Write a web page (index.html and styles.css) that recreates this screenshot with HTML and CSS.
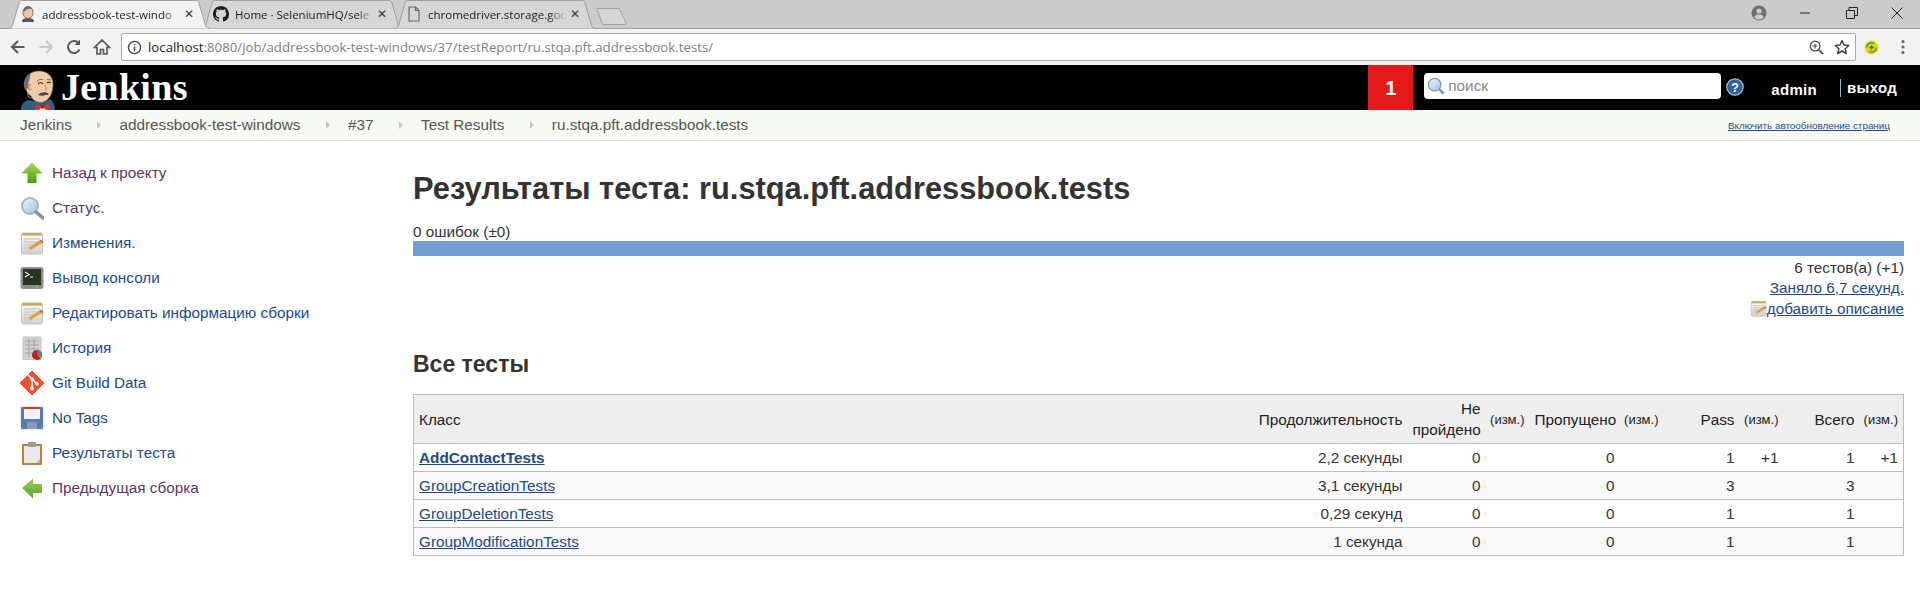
FILE: index.html
```html
<!DOCTYPE html>
<html lang="ru">
<head>
<meta charset="utf-8">
<title>Jenkins</title>
<link rel="stylesheet" href="styles.css">
</head>
<body>
<svg class="defs" width="0" height="0" aria-hidden="true">
  <defs>
    <linearGradient id="gUp" x1="0" y1="0" x2="0" y2="1"><stop offset="0" stop-color="#a6dc62"/><stop offset="1" stop-color="#4e9a06"/></linearGradient>
    <linearGradient id="gLeft" x1="0" y1="0" x2="0" y2="1"><stop offset="0" stop-color="#9ad05e"/><stop offset="1" stop-color="#5aa02a"/></linearGradient>
    <linearGradient id="gLens" x1="0" y1="0" x2="1" y2="1"><stop offset="0" stop-color="#eef5fc"/><stop offset="1" stop-color="#9dbfe2"/></linearGradient>
    <linearGradient id="gPaper" x1="0" y1="0" x2="0" y2="1"><stop offset="0" stop-color="#fbfbfb"/><stop offset="1" stop-color="#cfcfcb"/></linearGradient>
    <symbol id="notepad" viewBox="0 0 24 24">
      <rect x="1.500" y="2" width="21" height="21" rx="1.500" fill="url(#gPaper)" stroke="#b9b9b6" stroke-width=".8"/>
      <rect x="2" y="2" width="20" height="2.600" fill="#c9a95a"/>
      <path d="M4 8h16M4 11h15M4 14h9M4 17h6" stroke="#bdbdbd" stroke-width="1"/>
      <path d="M7 20.500l1.500-4L19.500 9.500l3 2.500L10.500 19z" fill="#dc9f4c"/>
      <path d="M7 20.500l1.500-4 2 2.500z" fill="#f2d7a6"/>
      <path d="M19.500 9.500l1.300-.8 2.700 2.200-1 1.100z" fill="#c4503c"/>
    </symbol>
  </defs>
</svg>

<div class="chrome-tabs">
  <div class="tab tab-active">
    <svg class="tab-shape" viewBox="0 0 202 29" preserveAspectRatio="none"><path d="M0 28.500C3 28.500 4 27 5 24L11 3C11.600 1 12.500 .5 14 .5H188C189.500 .5 190.400 1 191 3L197 24C198 27 199 28.500 202 28.500" fill="#f2f2f2" stroke="#a0a0a0"/></svg>
    <svg class="fav" viewBox="0 0 16 16"><ellipse cx="8" cy="6.500" rx="5" ry="6" fill="#f0c8a0" stroke="#555" stroke-width=".8"/><path d="M3.500 5C3 2 6 0 9 .5c2 .3 3 1.500 3.300 2.500C9 2.500 6 3 5 5.500z" fill="#6d6b6d"/><path d="M2 16c0-3 2-4 6-4s6 1 6 4z" fill="#3a5a7a"/><path d="M5.500 12l2.500 1 2.500-1v2.500L8 13.500l-2.500 1z" fill="#d33833"/></svg>
    <span class="tab-title">addressbook-test-windo</span>
    <span class="tab-x">✕</span>
  </div>
  <div class="tab">
    <svg class="tab-shape" viewBox="0 0 202 29" preserveAspectRatio="none"><path d="M0 28.500C3 28.500 4 27 5 24L11 3C11.600 1 12.500 .5 14 .5H188C189.500 .5 190.400 1 191 3L197 24C198 27 199 28.500 202 28.500" fill="#d6d6d6" stroke="#a0a0a0"/></svg>
    <svg class="fav" viewBox="0 0 16 16"><path fill="#1b1f23" d="M8 0C3.580 0 0 3.580 0 8c0 3.540 2.290 6.530 5.470 7.590.4.070.55-.17.55-.38 0-.19-.01-.82-.01-1.490-2.010.37-2.530-.49-2.690-.94-.09-.23-.48-.94-.82-1.130-.28-.15-.68-.52-.01-.53.630-.01 1.080.58 1.230.82.720 1.210 1.870.87 2.330.66.070-.52.280-.87.510-1.070-1.780-.2-3.640-.89-3.640-3.950 0-.87.310-1.590.82-2.150-.08-.2-.36-1.020.08-2.120 0 0 .67-.21 2.200.82.640-.18 1.320-.27 2-.27s1.360.09 2 .27c1.530-1.040 2.200-.82 2.200-.82.440 1.100.160 1.920.080 2.120.510.560.820 1.270.820 2.150 0 3.070-1.870 3.750-3.650 3.950.290.250.540.730.540 1.480 0 1.070-.010 1.930-.010 2.200 0 .210.150.460.550.380A8.010 8.010 0 0 0 16 8c0-4.420-3.580-8-8-8z"/></svg>
    <span class="tab-title">Home · SeleniumHQ/sele</span>
    <span class="tab-x">✕</span>
  </div>
  <div class="tab">
    <svg class="tab-shape" viewBox="0 0 202 29" preserveAspectRatio="none"><path d="M0 28.500C3 28.500 4 27 5 24L11 3C11.600 1 12.500 .5 14 .5H188C189.500 .5 190.400 1 191 3L197 24C198 27 199 28.500 202 28.500" fill="#d6d6d6" stroke="#a0a0a0"/></svg>
    <svg class="fav" viewBox="0 0 16 16"><path d="M3 1h6.500L13 4.500V15H3z" fill="none" stroke="#5f6368" stroke-width="1.100"/><path d="M9.500 1v3.500H13" fill="none" stroke="#5f6368" stroke-width="1.100"/></svg>
    <span class="tab-title">chromedriver.storage.goo</span>
    <span class="tab-x">✕</span>
  </div>
  <svg class="new-tab" viewBox="0 0 34 19"><path d="M1 1.500h21c1 0 1.500.4 1.800 1.200L30 16c.3 1-.2 1.500-1 1.500H8c-1 0-1.500-.4-1.800-1.200L1 2.500c-.2-.6 0-1 0-1z" fill="#d6d6d6" stroke="#a0a0a0"/></svg>
  <div class="window-controls">
    <svg class="win-profile" viewBox="0 0 16 16"><circle cx="8" cy="8" r="7.500" fill="#6e6e6e"/><circle cx="8" cy="6" r="2.600" fill="#ccc"/><path d="M3.200 12.200C4 10 6 9.500 8 9.500s4 .5 4.800 2.700C11.500 13.800 9.800 14.500 8 14.500s-3.500-.7-4.800-2.300z" fill="#ccc"/></svg>
    <svg class="win-min" viewBox="0 0 12 12"><path d="M1 6h10" stroke="#222" stroke-width="1"/></svg>
    <svg class="win-restore" viewBox="0 0 12 12"><path d="M.5 3.500h8v8h-8zM3 3.500V.5h8.500v8H8.500" fill="none" stroke="#222" stroke-width="1"/></svg>
    <svg class="win-close" viewBox="0 0 12 12"><path d="M.5.500l11 11M11.500.5l-11 11" stroke="#222" stroke-width="1"/></svg>
  </div>
</div>

<div class="chrome-toolbar">
  <svg class="nav-ic" viewBox="0 0 18 18"><path d="M15.500 9H3M9 3L3 9l6 6" fill="none" stroke="#5a5a5a" stroke-width="2"/></svg>
  <svg class="nav-ic" viewBox="0 0 18 18"><path d="M2.500 9H15M9 3l6 6-6 6" fill="none" stroke="#c8c8c8" stroke-width="2"/></svg>
  <svg class="nav-ic" viewBox="0 0 18 18"><path d="M14.500 11.500A6 6 0 1 1 13.500 5" fill="none" stroke="#5a5a5a" stroke-width="2"/><path d="M15 1.500V7H9.500z" fill="#5a5a5a"/></svg>
  <svg class="nav-ic" viewBox="0 0 18 18"><path d="M9 2l7.500 7.500H14V16h-3.500v-4.500h-3V16H4V9.500H1.500z" fill="none" stroke="#5a5a5a" stroke-width="1.700" stroke-linejoin="miter"/></svg>
  <div class="omnibox">
    <svg class="omni-info" viewBox="0 0 16 16"><circle cx="8" cy="8" r="6.500" fill="none" stroke="#444" stroke-width="1.500"/><path d="M8 7v5M8 4v1.600" stroke="#444" stroke-width="1.600"/></svg>
    <span class="url"><span class="url-host">localhost</span>:8080/job/addressbook-test-windows/37/testReport/ru.stqa.pft.addressbook.tests/</span>
    <svg class="omni-zoom" viewBox="0 0 16 16"><circle cx="6.500" cy="6.500" r="5.200" fill="none" stroke="#444" stroke-width="1.300"/><path d="M10.500 10.500L15 15" stroke="#444" stroke-width="1.700"/><path d="M4 6.500h5M6.500 4v5" stroke="#444" stroke-width="1.100"/></svg>
    <svg class="omni-star" viewBox="0 0 16 16"><path d="M8 1.500l2 4.500 4.800.5-3.600 3.200 1 4.800L8 12l-4.200 2.500 1-4.800L1.200 6.500 6 6z" fill="none" stroke="#444" stroke-width="1.500" stroke-linejoin="round"/></svg>
  </div>
  <svg class="ext" viewBox="0 0 16 16"><circle cx="8" cy="8" r="7.500" fill="#e8d820"/><path d="M3 8a5 5 0 0 1 8-4M13 8a5 5 0 0 1-8 4" fill="none" stroke="#4c9a3c" stroke-width="1.600"/><path d="M8 5.500v5M5.500 8h5" stroke="#2e8b2e" stroke-width="1.800"/></svg>
  <svg class="kebab" viewBox="0 0 4 16"><circle cx="2" cy="2.500" r="1.600" fill="#5f6368"/><circle cx="2" cy="8" r="1.600" fill="#5f6368"/><circle cx="2" cy="13.500" r="1.600" fill="#5f6368"/></svg>
</div>

<header class="jk-header">
  <svg class="jk-logo" viewBox="0 0 36 40">
    <path d="M1 40c0-5 2-8 7-10l7 1 9 1 6-3c3 2 5 6 5 11z" fill="#2f5f7f"/>
    <path d="M6 13C5 5 12 1 19 1c8 0 14 5 14 13 0 7-2 12-5 15-3 3-7 4-10 3-4-1-6-3-7-6-2-1-5-4-5-8z" fill="#f0cba6" stroke="#7a7268" stroke-width=".6"/>
    <path d="M5 20C2 13 5 5 11 3c-1 3-1 5-2 8-1 2-1 5-1 7-1 1-2 1-3 2zM7 22c1 3 3 5 5 7-2 0-4-2-5-4z" fill="#6d6b6d"/>
    <path d="M11 15c-2-1-3.500 0-3 2.500s2.500 3 3.500 2" fill="#e8b890" stroke="#8a6a50" stroke-width=".7"/>
    <path d="M18 14c1.500-1.500 3.500-1.500 5 0M27 13c1-1 2.500-1 3.500 0" fill="none" stroke="#3a2a20" stroke-width="1.100"/>
    <path d="M17 11c2-1.500 4-2 6-1.500M27 9.500c1.500-.5 3 0 4 1" fill="none" stroke="#6a5040" stroke-width=".8"/>
    <path d="M18 25c2-3 8-4 11-1-1 1-2 1-4 1-1 1-5 1-7 0z" fill="#4a4444"/>
    <path d="M25 15c1 2 1.500 4 .5 6" fill="none" stroke="#a07858" stroke-width=".8"/>
    <path d="M16 34l6 2.500 6.500-3 1.500 6.500H15z" fill="#d33833"/>
    <circle cx="22.500" cy="36.500" r="1.700" fill="#a01c1c"/>
    <path d="M20 38.500h5l.5 1.500h-6z" fill="#eee"/>
  </svg>
  <span class="jk-name">Jenkins</span>
  <span class="jk-spacer"></span>
  <span class="jk-badge">1</span>
  <div class="jk-search">
    <svg class="jk-search-ic" viewBox="0 0 20 20"><circle cx="8.500" cy="8.500" r="7" fill="url(#gLens)" stroke="#8d9aa5" stroke-width="1.500"/><path d="M13.500 13.500L18.500 18.500" stroke="#8a8a8a" stroke-width="2.600"/></svg>
    <span class="jk-search-text">поиск</span>
  </div>
  <svg class="jk-help" viewBox="0 0 18 18"><circle cx="9" cy="9" r="8.200" fill="#2f5f9f" stroke="#a8c0e0" stroke-width="1.200"/><text x="9" y="14" text-anchor="middle" class="jk-help-q">?</text></svg>
  <span class="jk-user">admin</span>
  <span class="jk-logout">выход</span>
</header>

<nav class="breadcrumbs">
  <span class="crumb">Jenkins</span><span class="crumb-arrow"></span>
  <span class="crumb">addressbook-test-windows</span><span class="crumb-arrow"></span>
  <span class="crumb">#37</span><span class="crumb-arrow"></span>
  <span class="crumb">Test Results</span><span class="crumb-arrow"></span>
  <span class="crumb">ru.stqa.pft.addressbook.tests</span>
  <a class="autorefresh" href="#">Включить автообновление страниц</a>
</nav>

<div class="page">
  <aside class="tasks">
    <a class="task visited" href="#">
      <svg class="task-ic" viewBox="0 0 24 24"><path d="M12 1.500L22.500 12.500H16.500V22H7.500V12.500H1.500z" fill="url(#gUp)"/></svg>Назад к проекту</a>
    <a class="task visited" href="#">
      <svg class="task-ic" viewBox="0 0 24 24"><circle cx="10" cy="10" r="8" fill="url(#gLens)" stroke="#a9b4be" stroke-width="2"/><path d="M16 16l7 6" stroke="#8f8f8f" stroke-width="3.500" stroke-linecap="round"/></svg>Статус.</a>
    <a class="task" href="#"><svg class="task-ic"><use href="#notepad"/></svg>Изменения.</a>
    <a class="task" href="#">
      <svg class="task-ic" viewBox="0 0 24 24"><rect x=".5" y="1" width="23" height="22" rx="3" fill="#8c8c88"/><rect x="3" y="3" width="18" height="16" fill="#26351f"/><path d="M5 6l4 2.500L5 11" fill="none" stroke="#e8f0e0" stroke-width="1.200"/><path d="M10 11h3" stroke="#e8f0e0"/><circle cx="17" cy="21" r=".8" fill="#8ae234"/></svg>Вывод консоли</a>
    <a class="task" href="#"><svg class="task-ic"><use href="#notepad"/></svg>Редактировать информацию сборки</a>
    <a class="task" href="#">
      <svg class="task-ic" viewBox="0 0 24 24"><rect x="3" y="1" width="18" height="23" fill="#d3d3d0" stroke="#aaa" stroke-width=".6"/><path d="M5 5h14M5 9h14M5 13h14M5 17h10M9 3v18M14 3v16" stroke="#a5a5a5" stroke-width="1"/><circle cx="17" cy="19" r="5" fill="#c91a1a"/><path d="M17 19V14a5 5 0 0 1 5 5z" fill="#4a7fbf"/><path d="M17 19h5a5 5 0 0 1-1.500 3.500z" fill="#6a9a3a"/></svg>История</a>
    <a class="task" href="#">
      <svg class="task-ic" viewBox="0 0 24 24"><path d="M12 0l12 12-12 12L0 12z" fill="#f05033" stroke="#f05033" stroke-linejoin="round"/><path d="M8 4l4 4M12 8v9M12 8l5 5" stroke="#fff" stroke-width="1.500"/><circle cx="12" cy="17.500" r="2" fill="#fff"/><circle cx="12" cy="8" r="1.800" fill="#fff"/><circle cx="17" cy="13" r="1.800" fill="#fff"/></svg>Git Build Data</a>
    <a class="task" href="#">
      <svg class="task-ic" viewBox="0 0 24 24"><rect x="0" y="0" width="24" height="24" rx="1" fill="#eaeaea"/><rect x="1" y="1" width="22" height="22" rx="1" fill="#5a7bb5"/><rect x="4" y="1" width="16" height="12" fill="#f4f4f4"/><rect x="4" y="1" width="16" height="2" fill="#d33"/><rect x="7" y="16" width="10" height="7" fill="#8a9bb5"/></svg>No Tags</a>
    <a class="task" href="#">
      <svg class="task-ic" viewBox="0 0 24 24"><rect x="2" y="3" width="20" height="21" rx="1" fill="#b8843e"/><rect x="4" y="5" width="16" height="17" fill="#e9e9e7"/><path d="M16 22l4-4v4z" fill="#bbb"/><rect x="8" y="1" width="8" height="5" rx="1" fill="#9a9a9a"/></svg>Результаты теста</a>
    <a class="task visited" href="#">
      <svg class="task-ic" viewBox="0 0 24 24"><path d="M2 12L13 2.500V8h9v9h-9v5.500z" fill="url(#gLeft)"/></svg>Предыдущая сборка</a>
  </aside>

  <main class="main">
    <h1 class="title">Результаты теста: ru.stqa.pft.addressbook.tests</h1>
    <div class="fails">0 ошибок (±0)</div>
    <div class="bar"></div>
    <div class="summary">
      <div>6 тестов(а) (+1)</div>
      <div><a href="#">Заняло 6,7 секунд.</a></div>
      <div class="add-desc"><svg class="note-ic"><use href="#notepad"/></svg><a href="#">добавить описание</a></div>
    </div>
    <h2 class="subtitle">Все тесты</h2>
    <table class="results">
      <colgroup>
        <col><col class="c-dur"><col class="c-fail"><col class="c-chg"><col class="c-skip"><col class="c-chg">
        <col class="c-pass"><col class="c-chg"><col class="c-pass"><col class="c-chg">
      </colgroup>
      <thead>
        <tr>
          <th class="left">Класс</th><th>Продолжительность</th><th>Не пройдено</th><th class="chg">(изм.)</th>
          <th>Пропущено</th><th class="chg">(изм.)</th><th>Pass</th><th class="chg">(изм.)</th><th>Всего</th><th class="chg">(изм.)</th>
        </tr>
      </thead>
      <tbody>
        <tr><td class="left"><a class="strong" href="#">AddContactTests</a></td><td>2,2 секунды</td><td>0</td><td></td><td>0</td><td></td><td>1</td><td>+1</td><td>1</td><td>+1</td></tr>
        <tr><td class="left"><a href="#">GroupCreationTests</a></td><td>3,1 секунды</td><td>0</td><td></td><td>0</td><td></td><td>3</td><td></td><td>3</td><td></td></tr>
        <tr><td class="left"><a href="#">GroupDeletionTests</a></td><td>0,29 секунд</td><td>0</td><td></td><td>0</td><td></td><td>1</td><td></td><td>1</td><td></td></tr>
        <tr><td class="left"><a href="#">GroupModificationTests</a></td><td>1 секунда</td><td>0</td><td></td><td>0</td><td></td><td>1</td><td></td><td>1</td><td></td></tr>
      </tbody>
    </table>
  </main>
</div>
</body>
</html>
```
FILE: styles.css
```css
* { box-sizing: border-box; }
html, body { margin: 0; padding: 0; height: 611px; overflow: hidden; background: #fff; }
body { font-family: "Liberation Sans", Arial, sans-serif; font-size: 15.300px; color: #333; }
a { color: #204a87; }
.defs { display: block; height: 0; }

/* browser tabs */
.chrome-tabs { height: 29px; background: #cbcbcb; border-bottom: 1px solid #a0a0a0; display: flex; align-items: flex-start; padding-left: 8px; font-family: "Open Sans", "Noto Sans", sans-serif; }
.tab { position: relative; width: 202px; height: 29px; margin-right: -9px; display: flex; align-items: center; padding: 0 0 1px 12px; }
.tab-active { z-index: 2; }
.tab-shape { position: absolute; inset: 0; width: 100%; height: 100%; z-index: 0; }
.fav { position: relative; width: 16px; height: 16px; flex: none; }
.tab-title { position: relative; margin-left: 6px; width: 138px; flex: none; white-space: nowrap; overflow: hidden; font-size: 11.500px; color: #222; -webkit-mask-image: linear-gradient(to right, #000 88%, transparent); mask-image: linear-gradient(to right, #000 88%, transparent); }
.tab-x { position: relative; margin-left: 4px; font-size: 12px; font-family: "DejaVu Sans", sans-serif; color: #333; }
.new-tab { width: 34px; height: 19px; margin: 7px 0 0 9px; flex: none; }
.window-controls { margin-left: auto; display: flex; align-items: center; height: 26px; }
.win-profile { width: 16px; height: 16px; margin-right: 32px; }
.win-min, .win-restore, .win-close { width: 12px; height: 12px; }
.win-min { margin-right: 35px; }
.win-restore { margin-right: 33px; }
.win-close { margin-right: 17px; }

/* browser toolbar */
.chrome-toolbar { height: 36px; background: #f2f2f2; display: flex; align-items: center; padding-left: 9px; }
.nav-ic { width: 18px; height: 18px; flex: none; margin-right: 10px; }
.omnibox { width: 1735px; height: 28px; flex: none; background: #fff; border: 1px solid #a9a9a9; border-radius: 2px; display: flex; align-items: center; padding: 0 5px; }
.omni-info { width: 15px; height: 15px; flex: none; }
.url { margin-left: 6px; font-family: "Open Sans", "Noto Sans", sans-serif; font-size: 13.250px; color: #808080; white-space: nowrap; }
.url-host { color: #222; }
.omni-zoom { width: 15px; height: 15px; margin-left: auto; }
.omni-star { width: 16px; height: 16px; margin-left: 10px; margin-right: 0; }
.ext { width: 15px; height: 15px; margin-left: 8px; flex: none; }
.kebab { width: 4px; height: 16px; margin-left: 22px; flex: none; }

/* Jenkins header */
.jk-header { height: 45px; background: #000; display: flex; align-items: stretch; padding-left: 20px; color: #fff; }
.jk-logo { width: 36px; height: 40px; flex: none; align-self: flex-end; }
.jk-name { font-family: "Liberation Serif", serif; font-weight: 700; font-size: 38px; letter-spacing: .3px; line-height: 45px; margin-left: 5px; }
.jk-spacer { flex: 1; }
.jk-badge { width: 45px; background: #e4191a; font-weight: 700; font-size: 20px; line-height: 47px; text-align: center; }
.jk-search { width: 297px; height: 26px; margin: 8px 0 0 11px; background: #fff; border-radius: 4px; display: flex; align-items: center; padding-left: 3px; }
.jk-search-ic { width: 18px; height: 18px; }
.jk-search-text { margin-left: 3px; font-size: 15.300px; color: #888; }
.jk-help { width: 18px; height: 18px; margin: 13px 0 0 5px; flex: none; }
.jk-help-q { font: 700 13px "Liberation Sans", sans-serif; fill: #fff; }
.jk-user { margin-left: 27px; font-weight: 700; font-size: 15px; line-height: 50px; letter-spacing: .3px; }
.jk-logout { margin: 14px 23px 0 23px; height: 18px; padding-left: 6px; border-left: 1px solid #8ab8e0; font-weight: 700; font-size: 15px; line-height: 18px; letter-spacing: .3px; }

/* breadcrumbs */
.breadcrumbs { height: 31px; background: #f6faf2; border-bottom: 1px solid #d3d7cf; display: flex; align-items: center; padding: 0 30px 0 20px; color: #555; }
.crumb-arrow { width: 0; height: 0; border-left: 4px solid #c5c5c5; border-top: 4px solid transparent; border-bottom: 4px solid transparent; margin: 0 18px 0 25.500px; }
.autorefresh { margin-left: auto; font-size: 9.900px; }

/* layout */
.page { display: flex; align-items: flex-start; }
.tasks { width: 413px; flex: none; padding: 14px 0 0 20px; }
.task { display: flex; align-items: center; height: 35px; text-decoration: none; white-space: nowrap; }
.task.visited { color: #5c3566; }
.task-ic { width: 24px; height: 24px; margin-right: 8px; flex: none; }
.main { flex: 1; padding-right: 16px; min-width: 0; }
.title { margin: 29px 0 0; font-size: 30.800px; line-height: 38px; font-weight: 700; }
.fails { margin-top: 15px; line-height: 18px; height: 18px; }
.bar { height: 15px; background: #729fcf; }
.summary { text-align: right; line-height: 20.500px; padding-top: 1.500px; }
.add-desc { display: flex; justify-content: flex-end; align-items: center; }
.note-ic { width: 17px; height: 17px; }
.subtitle { margin: 32px 0 0; font-size: 23px; line-height: 26px; font-weight: 700; }

/* table */
.results { margin-top: 17px; width: 100%; table-layout: fixed; border-collapse: collapse; border: 1px solid #bbb; color: #333; }
.c-dur { width: 160px; }
.c-fail { width: 78px; }
.c-chg { width: 44px; }
.c-skip { width: 90px; }
.c-pass { width: 76px; }
.results th, .results td { padding: 0 5px; text-align: right; font-weight: 400; }
.results th { height: 49px; background: #eee; line-height: 21px; color: #222; }
.results td { height: 28px; border-top: 1px solid #bbb; }
.results th.left, .results td.left { text-align: left; }
.results th.chg { font-size: 13px; padding-left: 0; }
.results tbody tr:nth-child(even) td { background: #f9f9f9; }
.strong { font-weight: 700; }
```
